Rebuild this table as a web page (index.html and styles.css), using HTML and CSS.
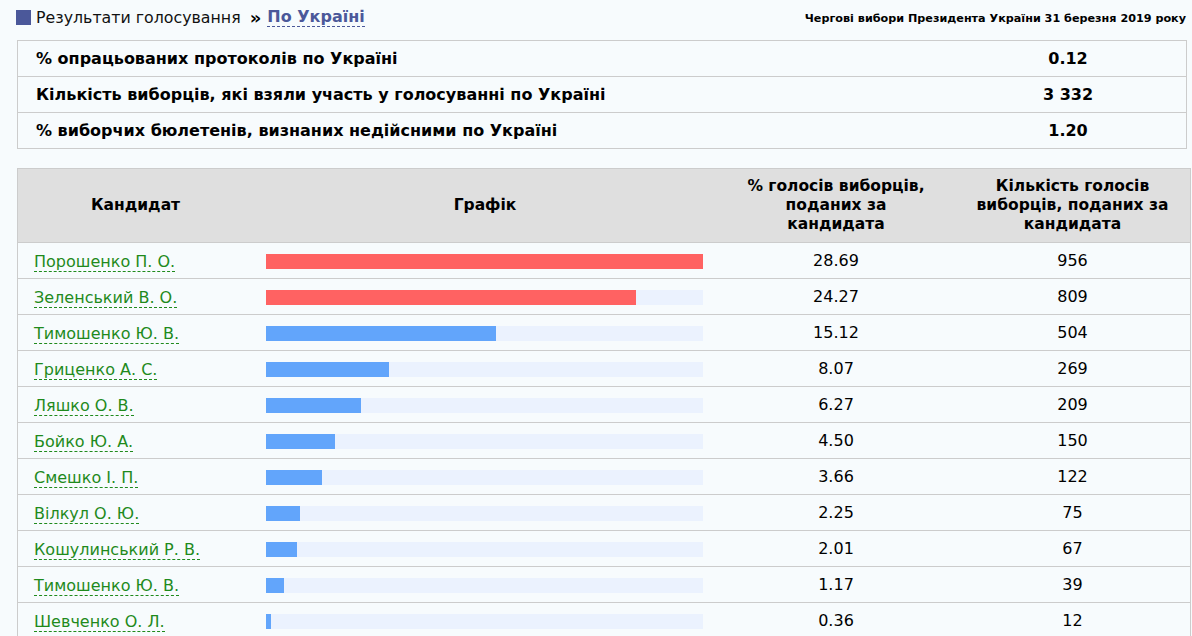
FILE: index.html
```html
<!DOCTYPE html>
<html lang="uk">
<head>
<meta charset="utf-8">
<title>Результати голосування</title>
<link rel="stylesheet" href="styles.css">
</head>
<body>
<div class="page">
  <div class="topbar">
    <div class="crumbs">
      <span class="square"></span>
      <span class="crumb">Результати голосування</span>
      <span class="sep">»</span>
      <span class="current">По Україні</span>
    </div>
    <div class="election">Чергові вибори Президента України 31 березня 2019 року</div>
  </div>

  <div class="summary">
    <div class="srow"><div class="slabel">% опрацьованих протоколів по Україні</div><div class="svalue">0.12</div></div>
    <div class="srow"><div class="slabel">Кількість виборців, які взяли участь у голосуванні по Україні</div><div class="svalue">3 332</div></div>
    <div class="srow"><div class="slabel">% виборчих бюлетенів, визнаних недійсними по Україні</div><div class="svalue">1.20</div></div>
  </div>

  <div class="results">
    <div class="rrow head">
      <div class="c1">Кандидат</div>
      <div class="c2">Графік</div>
      <div class="c3">% голосів виборців, поданих за кандидата</div>
      <div class="c4">Кількість голосів виборців, поданих за кандидата</div>
    </div>
    <div class="rrow"><div class="c1"><span class="name">Порошенко П. О.</span></div><div class="c2"><div class="track"><div class="fill red" style="width:100%"></div></div></div><div class="c3">28.69</div><div class="c4">956</div></div>
    <div class="rrow"><div class="c1"><span class="name">Зеленський В. О.</span></div><div class="c2"><div class="track"><div class="fill red" style="width:84.59%"></div></div></div><div class="c3">24.27</div><div class="c4">809</div></div>
    <div class="rrow"><div class="c1"><span class="name">Тимошенко Ю. В.</span></div><div class="c2"><div class="track"><div class="fill" style="width:52.70%"></div></div></div><div class="c3">15.12</div><div class="c4">504</div></div>
    <div class="rrow"><div class="c1"><span class="name">Гриценко А. С.</span></div><div class="c2"><div class="track"><div class="fill" style="width:28.13%"></div></div></div><div class="c3">8.07</div><div class="c4">269</div></div>
    <div class="rrow"><div class="c1"><span class="name">Ляшко О. В.</span></div><div class="c2"><div class="track"><div class="fill" style="width:21.85%"></div></div></div><div class="c3">6.27</div><div class="c4">209</div></div>
    <div class="rrow"><div class="c1"><span class="name">Бойко Ю. А.</span></div><div class="c2"><div class="track"><div class="fill" style="width:15.69%"></div></div></div><div class="c3">4.50</div><div class="c4">150</div></div>
    <div class="rrow"><div class="c1"><span class="name">Смешко І. П.</span></div><div class="c2"><div class="track"><div class="fill" style="width:12.76%"></div></div></div><div class="c3">3.66</div><div class="c4">122</div></div>
    <div class="rrow"><div class="c1"><span class="name">Вілкул О. Ю.</span></div><div class="c2"><div class="track"><div class="fill" style="width:7.84%"></div></div></div><div class="c3">2.25</div><div class="c4">75</div></div>
    <div class="rrow"><div class="c1"><span class="name">Кошулинський Р. В.</span></div><div class="c2"><div class="track"><div class="fill" style="width:7.01%"></div></div></div><div class="c3">2.01</div><div class="c4">67</div></div>
    <div class="rrow"><div class="c1"><span class="name">Тимошенко Ю. В.</span></div><div class="c2"><div class="track"><div class="fill" style="width:4.08%"></div></div></div><div class="c3">1.17</div><div class="c4">39</div></div>
    <div class="rrow"><div class="c1"><span class="name">Шевченко О. Л.</span></div><div class="c2"><div class="track"><div class="fill" style="width:1.25%"></div></div></div><div class="c3">0.36</div><div class="c4">12</div></div>
  </div>
</div>
</body>
</html>
```

FILE: styles.css
```css
html, body {
  margin: 0;
  padding: 0;
  background: #f7fbfd;
}
body {
  font-family: "DejaVu Sans", Verdana, sans-serif;
  color: #000;
  overflow: hidden;
}
.page {
  padding-left: 17px;
}
.topbar {
  display: flex;
  justify-content: space-between;
  align-items: center;
  height: 34px;
  margin-left: -1px;
  width: 1170px;
  margin-bottom: 6px;
}
.crumbs {
  display: flex;
  align-items: center;
  font-size: 15.8px;
  white-space: nowrap;
  padding-top: 1px;
}
.square {
  width: 15px;
  height: 15px;
  background: #4b589a;
  margin-right: 5px;
}
.crumb {
  color: #111;
}
.sep {
  font-weight: bold;
  font-size: 18px;
  margin: 0 6px 0 9px;
  line-height: 1;
}
.current {
  font-weight: bold;
  font-size: 16px;
  color: #4b589a;
  border-bottom: 1px dashed #4b589a;
  line-height: 18px;
}
.election {
  font-size: 11.2px;
  font-weight: bold;
  white-space: nowrap;
  padding-top: 2px;
}
.summary {
  width: 1168px;
  border: 1px solid #ccc;
}
.srow {
  display: flex;
  align-items: center;
  height: 35px;
  font-size: 16px;
  font-weight: bold;
}
.srow + .srow {
  border-top: 1px solid #ccc;
}
.slabel {
  flex: 1;
  padding-left: 18px;
  white-space: nowrap;
}
.svalue {
  width: 236px;
  text-align: center;
  font-size: 16px;
}
.results {
  margin-top: 19px;
  width: 1172px;
  border: 1px solid #ccc;
  border-bottom: none;
}
.rrow {
  display: grid;
  grid-template-columns: 235px 464px 238px 1fr;
  height: 35px;
  align-items: center;
  font-size: 16px;
}
.rrow + .rrow {
  border-top: 1px solid #ccc;
}
.rrow.head {
  height: 73px;
  background: #dfdfdf;
  font-weight: bold;
  font-size: 15.5px;
  line-height: 19px;
}
.head > div {
  text-align: center;
  padding: 0 8px;
}
.head .c1 { padding: 0; }
.head .c3 { padding: 0 22px; }
.c1 {
  padding-left: 16px;
  white-space: nowrap;
}
.c2 {
  padding: 0 14px 0 13px;
}
.c3, .c4 {
  text-align: center;
}
.name {
  color: #1f8a1c;
  border-bottom: 1px dashed #1f8a1c;
  line-height: 19px;
  display: inline-block;
  margin-top: 3px;
}
.track {
  height: 15px;
  background: #ebf2fe;
  margin-top: 1px;
}
.fill {
  height: 100%;
  background: #62a5fb;
}
.fill.red {
  background: #ff6262;
}
```
